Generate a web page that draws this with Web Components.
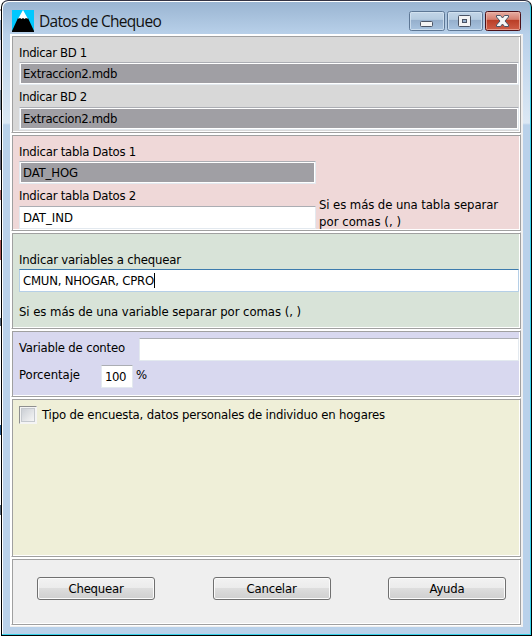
<!DOCTYPE html>
<html lang="es"><head><meta charset="utf-8"><title>Datos de Chequeo</title>
<style>html,body{margin:0;height:100%;overflow:hidden;background:#000}</style></head>
<body>
<app-window>
 <title-bar slot="title"></title-bar>
 <group-panel style="--bg:#d8d8d8;height:98px">
  <ui-text w="68" style="margin:8px 0 1px">Indicar BD 1</ui-text>
  <ui-field off><ui-text w="94">Extraccion2.mdb</ui-text></ui-field>
  <ui-text w="68" style="margin:4px 0 2px">Indicar BD 2</ui-text>
  <ui-field off><ui-text w="94">Extraccion2.mdb</ui-text></ui-field>
 </group-panel>
 <group-panel style="--bg:#efd8d8;height:97px">
  <ui-text w="117" style="margin:8px 0 1px">Indicar tabla Datos 1</ui-text>
  <ui-field off style="width:297px"><ui-text w="55">DAT_HOG</ui-text></ui-field>
  <ui-row>
   <div style="width:297px;margin-right:3px"><ui-text w="117" style="margin:4px 0 2px">Indicar tabla Datos 2</ui-text>
   <ui-field style="width:297px"><ui-text w="50">DAT_IND</ui-text></ui-field></div>
   <div style="padding-top:13px"><ui-text w="179" style="margin-bottom:1px">Si es más de una tabla separar</ui-text><ui-text w="82">por comas (, )</ui-text></div>
  </ui-row>
 </group-panel>
 <group-panel style="--bg:#d8e3d8;height:97px">
  <ui-text w="162" style="margin:18px 0 1px">Indicar variables a chequear</ui-text>
  <ui-field focus><ui-text w="131">CMUN, NHOGAR, CPRO</ui-text></ui-field>
  <ui-text w="282" style="margin-top:12px">Si es más de una variable separar por comas (, )</ui-text>
 </group-panel>
 <group-panel style="--bg:#d8d8ef;height:67px">
  <ui-row style="padding-top:6px"><ui-text w="106" style="margin:2px 14px 0 0">Variable de conteo</ui-text><ui-field style="width:380px"></ui-field></ui-row>
  <ui-row style="padding-top:4px"><ui-text w="61" style="margin:2px 21px 0 0">Porcentaje</ui-text><ui-field style="width:32px"><ui-text w="21">100</ui-text></ui-field><ui-text w="12" style="margin:2px 0 0 3px">%</ui-text></ui-row>
 </group-panel>
 <group-panel style="--bg:#efefd8;height:159px">
  <ui-row style="padding-top:6px"><check-box></check-box><ui-text w="343" style="margin:1px 0 0 5px">Tipo de encuesta, datos personales de individuo en hogares</ui-text></ui-row>
 </group-panel>
 <group-panel style="--bg:#efefef;height:67px">
  <ui-row style="padding:17px 13px 0 18px;justify-content:space-between"><push-button><ui-text w="55">Chequear</ui-text></push-button><push-button><ui-text w="50">Cancelar</ui-text></push-button><push-button><ui-text w="35">Ayuda</ui-text></push-button></ui-row>
 </group-panel>
</app-window>
<script>
const define=(name,html,ready)=>customElements.define(name,class extends HTMLElement{
 connectedCallback(){
  if(!this.shadowRoot){this.attachShadow({mode:'open'}).innerHTML=html}
  if(ready)ready(this)
 }
});
define('app-window',`<style>
:host{display:flex;box-sizing:border-box;width:532px;height:636px;font:13px/16px "DejaVu Sans Condensed","DejaVu Sans",sans-serif;font-stretch:condensed;color:#000;background:linear-gradient(#fff 0 9px,#a99 9px 11px,#fff 11px 20px,#8ca0bc 20px 40px,#dde 40px 90px,#789 90px 110px,#eef 110px 150px,#667 150px 170px,#fff 170px 190px,#a66 190px 200px,#fff 200px 240px,#a55 240px 260px,#fff 260px 318px,#567 318px 326px,#fff 326px 425px,#258 425px 435px,#fff 435px 505px,#567 505px 515px,#fff 515px)}
.frame{box-sizing:border-box;margin-left:1px;width:531px;height:636px;border:1px solid #000;border-top-color:#334;border-radius:7px 7px 0 0;background:linear-gradient(#99b4d1,#b9d1ea 34px,#dce8f4 122px,#b9d1ea 124px);padding:0 6px 7px 8px;box-shadow:inset -1px -1px #36d0e8,inset 1px 1px #fff}
.client{box-sizing:border-box;display:flex;flex-direction:column;gap:1px;background:#fff;width:513px;height:593px;padding:1px 2px 1px 1px;box-shadow:inset -2px -1px #f0f0f0}
</style><div class="frame"><slot name="title"></slot><div class="client"><slot></slot></div></div>`);
define('title-bar',`<style>
:host{display:flex;height:33px;box-sizing:border-box;padding:9px 0 0 2px}
.icon{width:22px;height:22px;flex:none}
h1{margin:0 auto 0 5px;font:16px/24px "Open Sans","Noto Sans",sans-serif;color:#111}
.buttons{display:flex;gap:2px;margin:1px 4px 0 0}
</style><svg class="icon" viewBox="0 0 22 22"><path fill="#00c8ff" d="M0 0h22v22H0z"/><path d="M6 8h10l6 13v1H0v-1z"/><path fill="#fff" d="M11 0l5 9-2-1-1.500 1-1.500-1-1.500 1-1.500-1-2 1z"/></svg>
<h1><ui-text w="122" style="font:15.500px/23px 'Open Sans','Noto Sans',sans-serif">Datos de Chequeo</ui-text></h1>
<div class="buttons">
<svg width="36" height="20"><defs><linearGradient id="g" x2="0" y2="1"><stop stop-color="#c3d6e8"/><stop offset=".42" stop-color="#b5cbe0"/><stop offset=".43" stop-color="#94aecb"/><stop offset="1" stop-color="#a9c4e0"/></linearGradient></defs><rect x=".5" y=".5" width="35" height="19" rx="2" fill="url(#g)" stroke="#5d7795"/><rect x="1.5" y="1.5" width="33" height="17" rx="1" fill="none" stroke="#d4e3f1" stroke-opacity=".8"/><rect x="11.5" y="10.5" width="12" height="5" rx="1" fill="#f4f4f4" stroke="#4b5465"/></svg>
<svg width="36" height="20"><defs><linearGradient id="h" x2="0" y2="1"><stop stop-color="#c3d6e8"/><stop offset=".42" stop-color="#b5cbe0"/><stop offset=".43" stop-color="#94aecb"/><stop offset="1" stop-color="#a9c4e0"/></linearGradient></defs><rect x=".5" y=".5" width="35" height="19" rx="2" fill="url(#h)" stroke="#5d7795"/><rect x="1.5" y="1.5" width="33" height="17" rx="1" fill="none" stroke="#d4e3f1" stroke-opacity=".8"/><rect x="11.5" y="4.5" width="12" height="11" rx="1" fill="#f4f4f4" stroke="#4b5465"/><rect x="15.5" y="8.5" width="4" height="3" fill="#94aecb" stroke="#4b5465"/></svg>
<svg width="36" height="20"><defs><linearGradient id="r" x2="0" y2="1"><stop stop-color="#e8b0a6"/><stop offset=".42" stop-color="#d57e6e"/><stop offset=".43" stop-color="#b83c25"/><stop offset="1" stop-color="#d0604a"/></linearGradient></defs><rect x=".5" y=".5" width="35" height="19" rx="2" fill="url(#r)" stroke="#4a1018"/><rect x="1.5" y="1.5" width="33" height="17" rx="1" fill="none" stroke="#f0b9ad" stroke-opacity=".7"/><path d="M11.500 4.500h4l2 2.500 2-2.500h4v1.500l-3.500 4 3.500 4v1.500h-4l-2-2.500-2 2.500h-4V14l3.500-4-3.500-4z" fill="#f6f6f6" stroke="#4b5465" stroke-linejoin="round"/></svg>
</div>`);
define('group-panel',`<style>:host{display:block;box-sizing:border-box;width:510px;flex:none;background:var(--bg);border:1px solid #a0a0a0;border-left-color:#fff;border-top-color:#fff;box-shadow:inset 1px 1px #a0a0a0,inset -1px -1px #fff;padding:1px 1px 0 7px}</style><slot></slot>`);
define('ui-row',`<style>:host{display:flex;align-items:flex-start}</style><slot></slot>`);
define('ui-field',`<style>:host{display:flex;box-sizing:border-box;width:500px;height:23px;background:#fff;border:1px solid #e3e9ef;border-top-color:#abadb3;padding:3px 0 0 3px}
:host([off]){background:#a09fa4;box-shadow:inset 0 0 0 1px #fff}
:host([focus]){border-color:#b5cfe7;border-top-color:#3d7bad}
i{display:none}:host([focus]) i{display:block;width:1px;height:15px;background:#000}</style><slot></slot><i></i>`);
define('check-box',`<style>:host{display:block;box-sizing:border-box;width:18px;height:18px;flex:none;border:1px solid #8e8f8f;border-right-color:#f4f4f4;border-bottom-color:#f4f4f4;padding:1px;background:#f4f4f4}div{box-sizing:border-box;width:14px;height:14px;border:1px solid #c5c9ce;background:linear-gradient(135deg,#cbcfd5,#f6f6f6)}</style><div></div>`);
define('push-button',`<style>:host{display:flex;box-sizing:border-box;width:118px;height:23px;border:1px solid #707070;border-radius:3px;box-shadow:inset 0 0 0 1px #fbfbfb;background:linear-gradient(#f2f2f2,#ebebeb 49%,#dddddd 50%,#cfcfcf);justify-content:center;padding-top:3px}</style><slot></slot>`);
/* Spreads the glyphs evenly so the text spans the width given in "w". */
define('ui-text',`<style>:host{display:block;white-space:nowrap;flex:none}span{display:inline-block;vertical-align:top}</style><span><slot></slot></span>`,el=>{
 const s=el.shadowRoot.querySelector('span'),w=+el.getAttribute('w'),n=el.textContent.length;
 el.style.width=w+'px';
 s.style.letterSpacing=(w-s.getBoundingClientRect().width)/n+'px';
});
</script>
</body></html>
